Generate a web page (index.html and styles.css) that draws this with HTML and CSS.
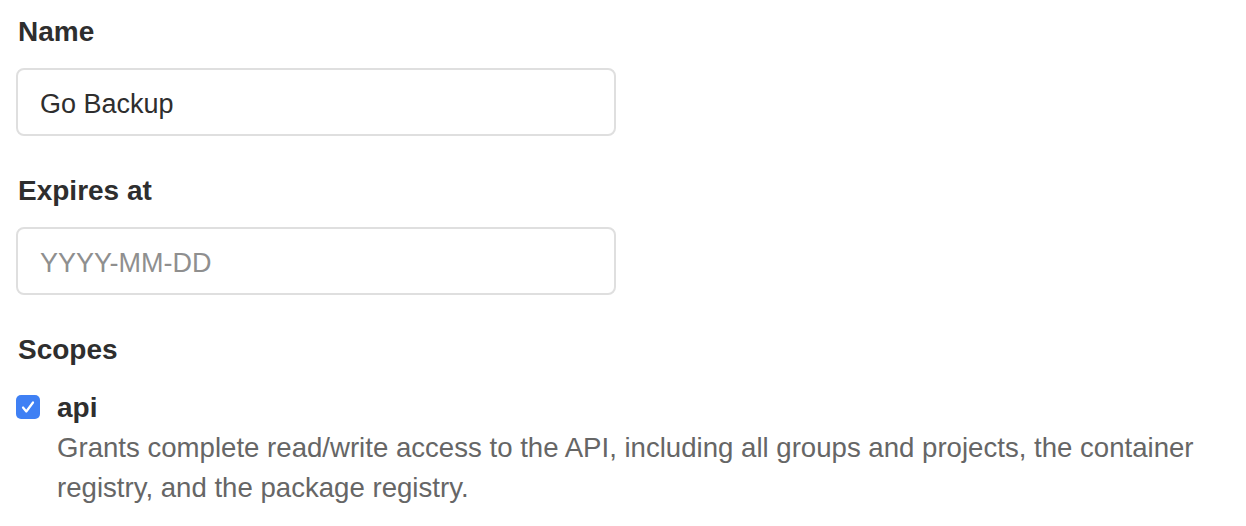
FILE: index.html
```html
<!DOCTYPE html>
<html>
<head>
<meta charset="utf-8">
<link rel="stylesheet" href="styles.css">
</head>
<body>
<form class="form">
  <div class="field">
    <label class="label">Name</label>
    <div class="input"><span class="value">Go Backup</span></div>
  </div>
  <div class="field">
    <label class="label">Expires at</label>
    <div class="input"><span class="placeholder">YYYY-MM-DD</span></div>
  </div>
  <div class="field">
    <label class="label">Scopes</label>
    <div class="scope">
      <span class="checkbox">
        <svg width="24" height="24" viewBox="0 0 24 24"><path d="M7 12.5 L10.3 16.5 L17 7.5" fill="none" stroke="#fff" stroke-width="2.2" stroke-linecap="round" stroke-linejoin="round"/></svg>
      </span>
      <div class="scope-text">
        <div class="scope-name">api</div>
        <div class="scope-desc">Grants complete read/write access to the API, including all groups and projects, the container registry, and the package registry.</div>
      </div>
    </div>
  </div>
</form>
</body>
</html>
```
FILE: styles.css
```css
html, body { margin: 0; padding: 0; background: #fff; }
body {
  font-family: "Liberation Sans", Arial, sans-serif;
  color: #303030;
}
.form { padding: 12px 16px 0 16px; display: flex; flex-direction: column; gap: 35px; }
.field { display: flex; flex-direction: column; }
.label {
  font-size: 28px;
  font-weight: 700;
  line-height: 40px;
  color: #2e2e2e;
  padding-left: 2px;
  margin-bottom: 16px;
}
.input {
  box-sizing: border-box;
  width: 600px;
  height: 68px;
  border: 2px solid #dfdfdf;
  border-radius: 8px;
  display: flex;
  align-items: center;
  padding: 4px 22px 0 22px;
  font-size: 27px;
}
.value { color: #2e2e2e; }
.placeholder { color: #8f8f8f; }
.scope { display: flex; align-items: flex-start; gap: 17px; margin-top: 0; }
.checkbox {
  width: 24px; height: 24px; flex: none;
  background: #3f80f4;
  border-radius: 5px;
  margin-top: 9px;
  display: flex;
}
.scope-text { display: flex; flex-direction: column; }
.scope-name { font-size: 28px; font-weight: 700; line-height: 40px; color: #2e2e2e; margin-top: 2px; }
.scope-desc { font-size: 27.6px; line-height: 40px; color: #666; max-width: 1160px; }
```
